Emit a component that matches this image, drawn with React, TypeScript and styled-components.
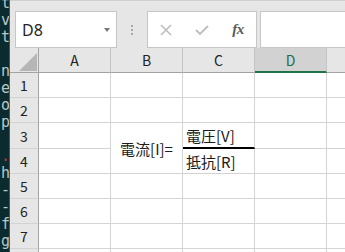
import React from 'react';
import styled, { createGlobalStyle } from "styled-components";

const GlobalStyle = createGlobalStyle`
  html, body {
    margin: 0;
    padding: 0;
    background: #e6e6e6;
  }
`;

const Screen = styled.div`
  width: 345px;
  height: 252px;
  overflow: hidden;
  display: flex;
  background: #e6e6e6;
  font-family: "Noto Sans", "Noto Sans CJK JP", sans-serif;
`;

const Terminal = styled.div`
  width: 9px;
  flex: none;
  background: #0b2b2f;
  border-right: 1px solid #2b6650;
  overflow: hidden;
`;

const TerminalText = styled.pre`
  margin: -5px 0 0 1px;
  font-family: "DejaVu Sans Mono", monospace;
  font-size: 15px;
  line-height: 17px;
  color: #b7c9c8;
`;

const RedDot = styled.span`
  color: #c0392b;
`;

const Main = styled.div`
  flex: 1;
  display: flex;
  flex-direction: column;
  min-width: 0;
`;

const Toolbar = styled.div`
  height: 58px;
  box-sizing: border-box;
  border-top: 1px solid #cfcfcf;
  padding: 10px 0 0 5px;
  display: flex;
  align-items: flex-start;
`;

const Box = styled.div<{ $width?: number }>`
  height: 37px;
  box-sizing: border-box;
  background: #fff;
  border: 1px solid #c6c6c6;
  display: flex;
  align-items: center;
  ${({ $width }) => ($width ? `width: ${$width}px; flex: none;` : "flex: 1;")}
`;

const NameText = styled.span`
  flex: 1;
  padding-left: 6px;
  font-size: 16px;
  color: #262626;
`;

const DropArrow = styled.span`
  width: 0;
  height: 0;
  margin-right: 6px;
  border-left: 3.5px solid transparent;
  border-right: 3.5px solid transparent;
  border-top: 4px solid #777;
`;

const Grip = styled.div`
  width: 30px;
  height: 37px;
  flex: none;
  display: flex;
  flex-direction: column;
  align-items: center;
  justify-content: center;
  gap: 2px;
`;

const GripDot = styled.span`
  width: 2px;
  height: 2px;
  background: #a8a8a8;
`;

const IconSlot = styled.div`
  width: 36px;
  height: 100%;
  display: flex;
  align-items: center;
  justify-content: center;
`;

const Fx = styled.span`
  font-family: "Liberation Serif", serif;
  font-style: italic;
  font-weight: bold;
  font-size: 15px;
  color: #5a5a5a;
  letter-spacing: -0.5px;
`;

const FormulaBox = styled(Box)`
  margin-left: 3px;
  margin-right: -2px;
`;

const Sheet = styled.div`
  display: grid;
  grid-template-columns: 29px repeat(5, 72px);
  grid-template-rows: 25px 25px 25px 26px 25px 25px 25px 25px 25px;
  background: #fff;
  font-family: "Noto Sans CJK JP", "Noto Sans", sans-serif;
`;

const Corner = styled.div`
  box-sizing: border-box;
  background: #e6e6e6;
  border-right: 1px solid #a3a3a3;
  border-bottom: 1px solid #a3a3a3;
  display: flex;
  align-items: flex-end;
  justify-content: flex-end;
  padding: 0 1px 1px 0;
`;

const Triangle = styled.span`
  width: 0;
  height: 0;
  border-left: 18px solid transparent;
  border-bottom: 18px solid #b6b6b6;
`;

const ColHead = styled.div<{ $active?: boolean }>`
  box-sizing: border-box;
  background: ${({ $active }) => ($active ? "#d2d2d2" : "#e6e6e6")};
  border-right: 1px solid #c3c3c3;
  border-bottom: ${({ $active }) => ($active ? "2px solid #217346" : "1px solid #a3a3a3")};
  color: ${({ $active }) => ($active ? "#1f6e43" : "#222")};
  font-size: 14px;
  display: flex;
  align-items: center;
  justify-content: center;
  padding-top: ${({ $active }) => ($active ? "1px" : "0")};
`;

const RowHead = styled.div`
  box-sizing: border-box;
  background: #e6e6e6;
  border-right: 1px solid #a3a3a3;
  border-bottom: 1px solid #d2d2d2;
  color: #222;
  font-size: 14px;
  display: flex;
  align-items: center;
  justify-content: center;
`;

const Cell = styled.div<{ $span?: number; $align?: string; $thickBottom?: boolean }>`
  box-sizing: border-box;
  border-right: 1px solid #d4d4d4;
  border-bottom: ${({ $thickBottom }) => ($thickBottom ? "2px solid #000" : "1px solid #d4d4d4")};
  grid-row: ${({ $span }) => ($span ? `span ${$span}` : "auto")};
  font-size: 15px;
  color: #1a1a1a;
  display: flex;
  align-items: center;
  justify-content: ${({ $align }) => ($align === "center" ? "center" : "flex-start")};
  padding: 0 3px;
  white-space: nowrap;
`;

const columns = ["A", "B", "C", "D", "E"];

const CloseIcon = () => (
  <svg width="12" height="12" viewBox="0 0 12 12">
    <path d="M1 1 L11 11 M11 1 L1 11" stroke="#bdbdbd" strokeWidth="1.6" fill="none" />
  </svg>
);

const CheckIcon = () => (
  <svg width="14" height="10" viewBox="0 0 14 10">
    <path d="M1 5 L5 9 L13 1" stroke="#bdbdbd" strokeWidth="1.8" fill="none" />
  </svg>
);

const renderRow = (row: number) => {
  const cells: React.ReactNode[] = [<RowHead key={`h${row}`}>{row}</RowHead>];
  columns.forEach((col) => {
    const key = `${col}${row}`;
    if (col === "B" && row === 4) return;
    if (col === "B" && row === 3) {
      cells.push(<Cell key={key} $span={2} $align="center">電流[I]=</Cell>);
    } else if (col === "C" && row === 3) {
      cells.push(<Cell key={key} $thickBottom>電圧[V]</Cell>);
    } else if (col === "C" && row === 4) {
      cells.push(<Cell key={key}>抵抗[R]</Cell>);
    } else {
      cells.push(<Cell key={key} />);
    }
  });
  return cells;
};

const App = () => {
  return (
    <Screen>
      <GlobalStyle />
      <Terminal>
        <TerminalText>
          {"t\nv\nt\n\nn\ne\no\np\n\n"}
          <RedDot>.</RedDot>
          {"\nh\n-\n-\nf\ng"}
        </TerminalText>
      </Terminal>
      <Main>
        <Toolbar>
          <Box $width={102}>
            <NameText>D8</NameText>
            <DropArrow />
          </Box>
          <Grip>
            <GripDot />
            <GripDot />
            <GripDot />
          </Grip>
          <Box $width={110}>
            <IconSlot><CloseIcon /></IconSlot>
            <IconSlot><CheckIcon /></IconSlot>
            <IconSlot><Fx>fx</Fx></IconSlot>
          </Box>
          <FormulaBox />
        </Toolbar>
        <Sheet>
          <Corner><Triangle /></Corner>
          {columns.map((col) => (
            <ColHead key={col} $active={col === "D"}>{col}</ColHead>
          ))}
          {[1, 2, 3, 4, 5, 6, 7, 8].map(renderRow)}
        </Sheet>
      </Main>
    </Screen>
  );
};

export default App;
